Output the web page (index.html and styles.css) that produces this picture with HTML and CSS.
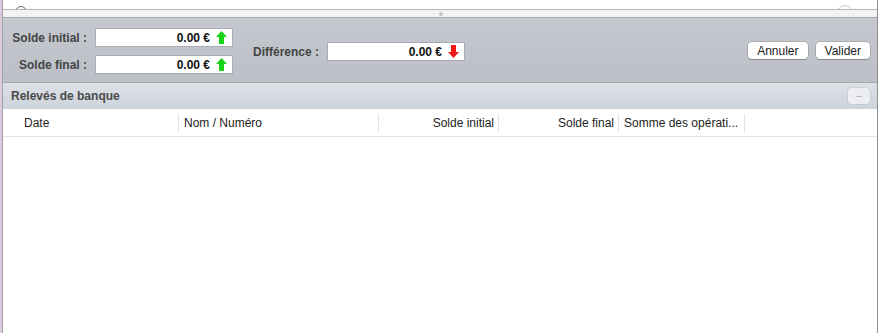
FILE: index.html
```html
<!DOCTYPE html>
<html lang="fr">
<head>
    <meta charset="UTF-8">
    <title>Rapprochement bancaire</title>
    <link rel="stylesheet" href="styles.css">
</head>
<body>
    <div class="frame">
        <div class="side-strip"></div>
        <div class="window">
            <div class="top-bar">
                <span class="round-btn left"></span>
                <span class="round-btn right"></span>
            </div>
            <div class="drag-strip"><span class="grip"></span></div>

            <div class="form-panel">
                <div class="balances">
                    <div class="field-row">
                        <label class="field-label">Solde initial :</label>
                        <div class="amount-box">
                            <span class="amount">0.00 €</span>
                            <svg class="arrow" width="11" height="13" viewBox="0 0 11 13"><path d="M5.5 0 L11 6 L8 6 L8 13 L3 13 L3 6 L0 6 Z" fill="#18d418"/></svg>
                        </div>
                    </div>
                    <div class="field-row">
                        <label class="field-label">Solde final :</label>
                        <div class="amount-box">
                            <span class="amount">0.00 €</span>
                            <svg class="arrow" width="11" height="13" viewBox="0 0 11 13"><path d="M5.5 0 L11 6 L8 6 L8 13 L3 13 L3 6 L0 6 Z" fill="#18d418"/></svg>
                        </div>
                    </div>
                </div>

                <div class="field-row diff">
                    <label class="field-label">Différence :</label>
                    <div class="amount-box">
                        <span class="amount">0.00 €</span>
                        <svg class="arrow" width="11" height="13" viewBox="0 0 11 13"><path d="M5.5 13 L11 7 L8 7 L8 0 L3 0 L3 7 L0 7 Z" fill="#f01818"/></svg>
                    </div>
                </div>

                <div class="actions">
                    <button class="mac-btn">Annuler</button>
                    <button class="mac-btn">Valider</button>
                </div>
            </div>

            <div class="section-header">
                <span class="section-title">Relevés de banque</span>
                <button class="collapse-btn">–</button>
            </div>

            <div class="table-header">
                <div class="col col-date">Date</div>
                <div class="col col-name">Nom / Numéro</div>
                <div class="col col-num">Solde initial</div>
                <div class="col col-num">Solde final</div>
                <div class="col col-sum">Somme des opérati...</div>
                <div class="col col-rest"></div>
            </div>
            <div class="table-body"></div>
        </div>
        <div class="right-gap"></div>
    </div>
</body>
</html>
```

FILE: styles.css
```css
* {
    margin: 0;
    padding: 0;
    box-sizing: border-box;
}

body {
    font-family: 'Liberation Sans', Arial, sans-serif;
    font-size: 12px;
    background: white;
    width: 880px;
    height: 333px;
    overflow: hidden;
}

.frame {
    display: flex;
    height: 333px;
}

.side-strip {
    width: 2px;
    background: #dccbe0;
}

.window {
    width: 876px;
    border-left: 1px solid #a2a2a2;
    border-right: 1px solid #8e8e8e;
    display: flex;
    flex-direction: column;
    background: white;
}

.right-gap {
    flex: 1;
    background: white;
}

.top-bar {
    height: 10px;
    position: relative;
    overflow: hidden;
    border-bottom: 1px solid #b4b4b4;
}

.round-btn {
    position: absolute;
    top: 5px;
    width: 16px;
    height: 16px;
    border-radius: 50%;
    border: 1px solid #c8c8c8;
    background: white;
}

.round-btn.left {
    left: 12px;
    top: 6px;
    border-color: #6a6a6a;
    border-width: 1.5px;
    width: 12px;
    height: 12px;
}

.round-btn.right {
    left: 834px;
}

.drag-strip {
    height: 8px;
    background: #f2f2f2;
    border-bottom: 1px solid #aaaaaa;
    display: flex;
    justify-content: center;
    align-items: center;
}

.grip {
    width: 4px;
    height: 4px;
    border-radius: 50%;
    background: #c4c4c4;
    margin-left: 2px;
}

.form-panel {
    height: 65px;
    background: linear-gradient(#c5c9cf, #bcc0c6);
    border-bottom: 1px solid #a6a9ad;
    display: flex;
    align-items: center;
    padding: 2px 7px 0 0;
}

.balances {
    display: flex;
    flex-direction: column;
    gap: 8px;
    width: 230px;
}

.field-row {
    display: flex;
    align-items: center;
}

.field-label {
    width: 92px;
    padding-right: 8px;
    text-align: right;
    font-weight: bold;
    color: #444;
}

.amount-box {
    width: 138px;
    height: 19px;
    background: white;
    border: 1px solid #a9adb3;
    display: flex;
    align-items: center;
    justify-content: flex-end;
    padding-right: 5px;
}

.amount {
    font-weight: bold;
    color: #111;
    margin-right: 6px;
}

.arrow {
    display: block;
}

.diff {
    margin-left: 20px;
    margin-top: 1px;
}

.diff .field-label {
    width: auto;
    padding-right: 8px;
}

.actions {
    margin-left: auto;
    display: flex;
    gap: 8px;
    margin-top: -1px;
}

.mac-btn {
    font-family: 'Liberation Sans', Arial, sans-serif;
    font-size: 12px;
    height: 17px;
    padding: 0 9px;
    background: white;
    color: #222;
    border: none;
    border-radius: 4px;
    box-shadow: 0 0 0 0.5px rgba(0,0,0,0.25), 0 1px 1px rgba(0,0,0,0.2);
}

.section-header {
    height: 26px;
    background: linear-gradient(#dde1e7, #cdd3da);
    display: flex;
    align-items: center;
    justify-content: space-between;
    padding: 0 7px 0 8px;
}

.section-title {
    font-weight: bold;
    color: #4a4a4a;
}

.collapse-btn {
    width: 22px;
    height: 16px;
    border: none;
    border-radius: 4px;
    background: #eceef1;
    color: #999;
    font-size: 9px;
    box-shadow: 0 0 0 0.5px rgba(0,0,0,0.12);
}

.table-header {
    height: 28px;
    display: grid;
    grid-template-columns: 176px 200px 120px 120px 126px 1fr;
    align-items: center;
    border-bottom: 1px solid #e2e2e2;
    color: #222;
    padding-top: 1px;
}

.col {
    height: 18px;
    line-height: 18px;
    border-right: 1px solid #e2e2e2;
    white-space: nowrap;
    overflow: hidden;
}

.col-date {
    padding-left: 21px;
}

.col-name,
.col-sum {
    padding-left: 5px;
}

.col-num {
    text-align: right;
    padding-right: 4px;
}

.col-rest {
    border-right: none;
}

.table-body {
    flex: 1;
    background: white;
}
```
